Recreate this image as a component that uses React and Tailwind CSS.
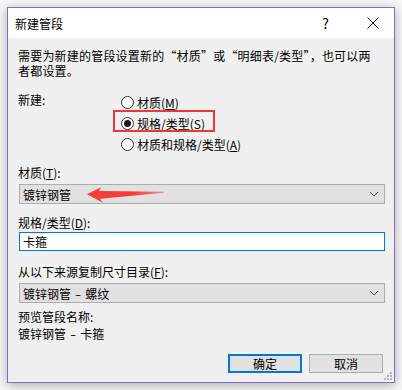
import React from 'react';

const Chevron = () => (
  <svg width="10" height="6" viewBox="0 0 10 6" className="mr-[5px]">
    <path d="M1 1 L5 5 L9 1" fill="none" stroke="#555" strokeWidth="1" />
  </svg>
);

const Radio = ({ checked, children }) => (
  <div className="flex h-[21px] items-center">
    <span className="flex h-[13px] w-[13px] items-center justify-center rounded-full border border-[#333] bg-white">
      {checked && <span className="h-[7px] w-[7px] rounded-full bg-[#1a1a1a]" />}
    </span>
    <span className="ml-[3px] leading-[15px]">{children}</span>
  </div>
);

const Dashed = ({ left, right }) => (
  <span className="inline-flex items-center leading-[15px]">
    {left}
    <span className="mx-[5px] inline-block scale-x-150">-</span>
    {right}
  </span>
);

const Select = ({ value, children }) => (
  <div className="relative ml-[1px] flex h-[20px] w-[366px] items-center justify-between border border-[#adadad] bg-[#e1e1e1] pl-[3px]">
    <span className="leading-[15px]">{value}</span>
    <Chevron />
    {children}
  </div>
);

export default function App() {
  return (
    <div className="h-[390px] w-[402px] bg-[#f6f6f6] pl-[7px] pt-[7px] font-['Noto_Sans_CJK_SC','Microsoft_YaHei',sans-serif] text-[12px] text-black">
      <div className="flex h-[376px] w-[388px] flex-col border border-[#8a6bc4] shadow-[0_2px_10px_rgba(0,0,0,0.3)]">
        <div className="flex h-[30px] items-center bg-white pl-[7px]">
          <span className="leading-[15px]">新建管段</span>
          <span className="ml-auto mr-[38px] text-[14px] leading-[15px]">?</span>
          <svg width="12" height="12" viewBox="0 0 12 12" className="mr-[15px]">
            <path d="M0.5 0.5 L11.5 11.5 M11.5 0.5 L0.5 11.5" stroke="#111" strokeWidth="1" />
          </svg>
        </div>

        <div className="relative flex flex-1 flex-col bg-[#f0f0f0] pl-[10px]">
          <div className="mt-[10px] flex flex-col whitespace-nowrap tracking-[0.2px]">
            <span className="leading-[15px]">需要为新建的管段设置新的“材质”或“明细表/类型”，也可以两</span>
            <span className="leading-[15px]">者都设置。</span>
          </div>

          <div className="mt-[14px] flex">
            <span className="w-[103px] leading-[15px]">新建:</span>
            <div className="relative flex flex-col">
              <Radio>
                材质(<span className="underline">M</span>)
              </Radio>
              <Radio checked>
                规格/类型(<span className="underline">S</span>)
              </Radio>
              <Radio>
                材质和规格/类型(<span className="underline">A</span>)
              </Radio>
              <div className="absolute left-[-8px] top-[18px] h-[22px] w-[102px] border-[2.5px] border-[#f23434]" />
            </div>
          </div>

          <span className="mt-[10px] leading-[15px]">
            材质(<span className="underline">T</span>):
          </span>
          <div className="mt-[4px]">
            <Select value="镀锌钢管">
              <svg width="80" height="20" viewBox="0 0 80 20" className="absolute left-[66px] top-[-1px]">
                <defs>
                  <linearGradient id="arrowFade" x1="0" x2="1" y1="0" y2="0">
                    <stop offset="0" stopColor="#f73a3a" />
                    <stop offset="0.6" stopColor="#f73a3a" />
                    <stop offset="1" stopColor="#f73a3a" stopOpacity="0.5" />
                  </linearGradient>
                </defs>
                <path
                  d="M1 10.2 L15 3.2 Q13.5 5.5 13 7 L78 7.8 L78 8.8 L14 14.8 Q15.5 17 17.5 19 Z"
                  fill="url(#arrowFade)"
                />
              </svg>
            </Select>
          </div>

          <span className="mt-[11px] leading-[15px]">
            规格/类型(<span className="underline">D</span>):
          </span>
          <div className="ml-[1px] mt-[2px] flex h-[19px] w-[366px] items-center border border-[#0078d7] bg-white pl-[3px]">
            <span className="leading-[15px]">卡箍</span>
          </div>

          <span className="mt-[13px] leading-[15px]">
            从以下来源复制尺寸目录(<span className="underline">F</span>):
          </span>
          <div className="mt-[4px]">
            <Select value={<Dashed left="镀锌钢管" right="螺纹" />} />
          </div>

          <span className="mt-[6px] leading-[15px]">预览管段名称:</span>
          <div className="mt-[1px]">
            <Dashed left="镀锌钢管" right="卡箍" />
          </div>

          <div className="mr-[11px] mt-[11px] flex justify-end gap-[7px]">
            <button className="flex h-[19px] w-[74px] items-center justify-center border-2 border-[#0078d7] bg-[#e1e1e1] leading-[15px]">
              确定
            </button>
            <button className="flex h-[19px] w-[74px] items-center justify-center border border-[#adadad] bg-[#e1e1e1] leading-[15px]">
              取消
            </button>
          </div>

          <svg width="10" height="10" viewBox="0 0 10 10" className="absolute bottom-[1px] right-[1px]">
            <g fill="#b5b5b5">
              <rect x="7" y="1" width="2" height="2" />
              <rect x="4" y="4" width="2" height="2" />
              <rect x="7" y="4" width="2" height="2" />
              <rect x="1" y="7" width="2" height="2" />
              <rect x="4" y="7" width="2" height="2" />
              <rect x="7" y="7" width="2" height="2" />
            </g>
          </svg>
        </div>
      </div>
    </div>
  );
}
